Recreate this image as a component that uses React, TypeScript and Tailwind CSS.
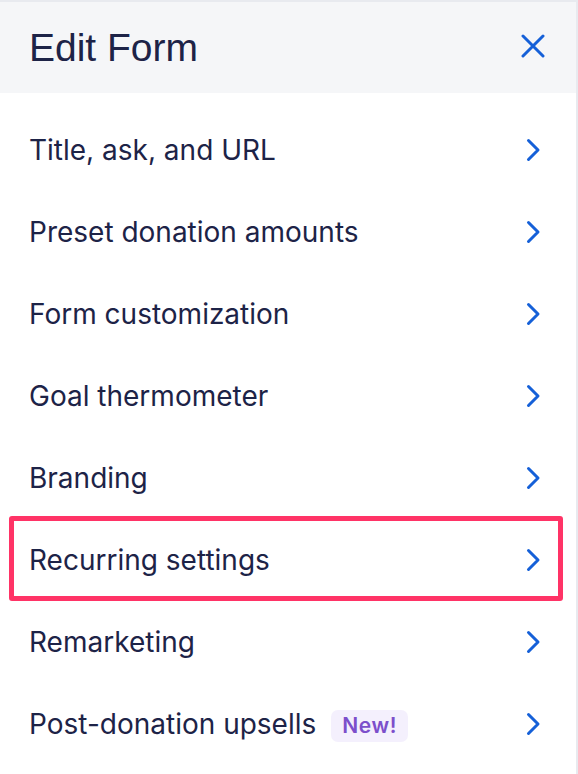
import React from "react";

const items = [
  "Title, ask, and URL",
  "Preset donation amounts",
  "Form customization",
  "Goal thermometer",
  "Branding",
  "Recurring settings",
  "Remarketing",
  "Post-donation upsells",
];

function Chevron() {
  return (
    <svg width="16" height="24" viewBox="0 0 16 24" fill="none">
      <path d="M2.5 2.5 L12 12 L2.5 21.5" stroke="#1560d8" strokeWidth="3" strokeLinecap="round" strokeLinejoin="round" />
    </svg>
  );
}

export default function App() {
  return (
    <div className="w-[578px] h-[774px] bg-white border-t-2 border-r-2 border-[#e8eaef] overflow-hidden">
      <div className="h-[91px] bg-[#f5f6f8] flex items-center justify-between pl-[29px] pr-[31px]">
        <h1 className="text-[39px] leading-none text-[#1d2347] -mt-[1px]" style={{ fontFamily: '"Liberation Sans", Arial, sans-serif' }}>
          Edit Form
        </h1>
        <svg width="24" height="24" viewBox="0 0 24 24" fill="none" className="-mt-[4px]">
          <path d="M2 2 L22 22 M22 2 L2 22" stroke="#1560d8" strokeWidth="3" strokeLinecap="round" />
        </svg>
      </div>
      <div className="pt-[16px]" style={{ fontFamily: 'Inter, "Noto Sans", sans-serif' }}>
        {items.map((label, i) => (
          <div key={label} className="relative h-[82px] flex items-center justify-between pl-[29px] pr-[34px]">
            <div className="flex items-center gap-[15px]">
              <span className="text-[28px] text-[#1d2347]">{label}</span>
              {i === 7 && (
                <span className="mt-[3px] px-[11px] h-[32px] flex items-center rounded-[7px] bg-[#f4f0fd] text-[#7c4fcb] text-[21px] font-semibold tracking-[0.6px]">
                  New!
                </span>
              )}
            </div>
            <Chevron />
            {i === 5 && (
              <div className="absolute left-[9px] top-[-3px] w-[554px] h-[85px] border-[5px] border-[#ff3366] rounded-[3px] pointer-events-none" />
            )}
          </div>
        ))}
      </div>
    </div>
  );
}
